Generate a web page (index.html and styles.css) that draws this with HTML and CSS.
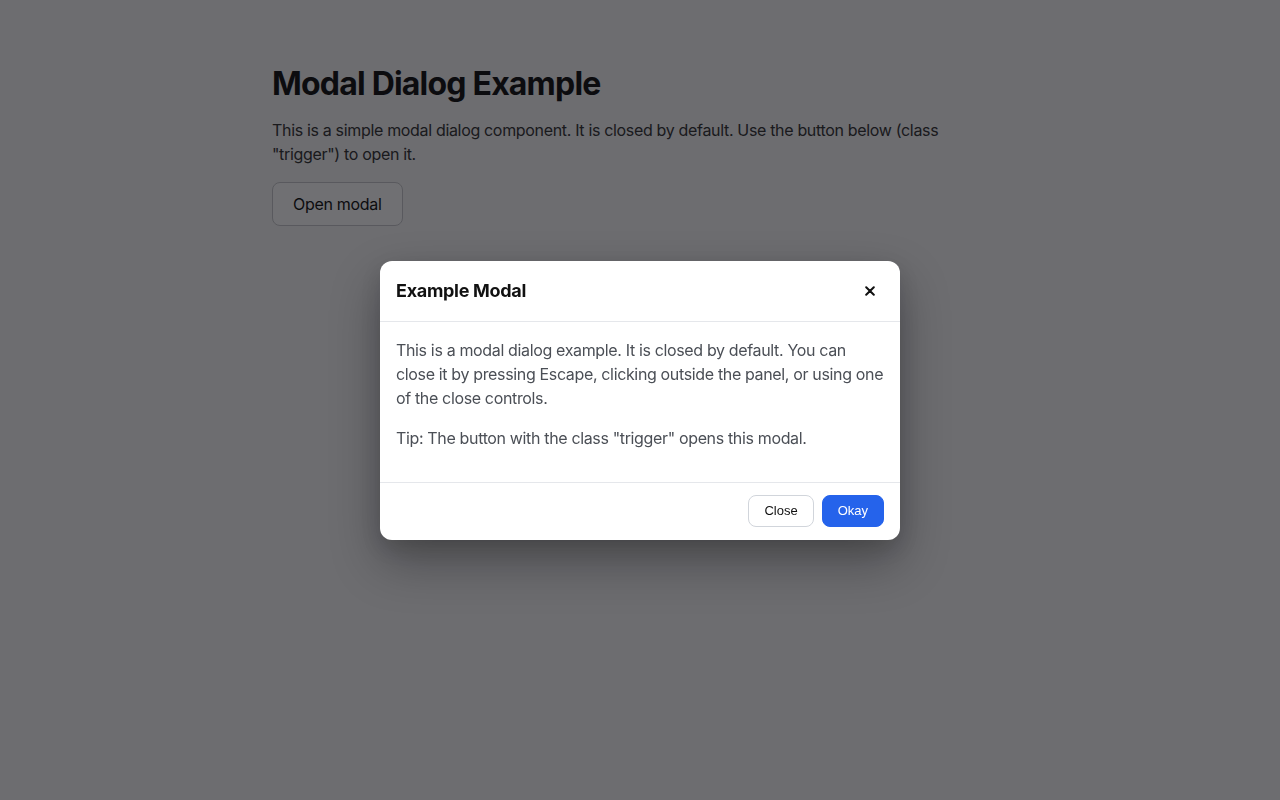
FILE: index.html
```html
<!DOCTYPE html>
<html lang="en">
<head>
<meta charset="utf-8">
<title>Modal Dialog Example</title>
<link rel="stylesheet" href="styles.css">
</head>
<body>
<main class="container">
  <h1 class="title">Modal Dialog Example</h1>
  <p class="lead">This is a simple modal dialog component. It is closed by default. Use the button below (class "trigger") to open it.</p>
  <button class="trigger" type="button">Open modal</button>
</main>

<div class="overlay">
  <div class="modal" role="dialog" aria-modal="true" aria-labelledby="modal-title">
    <header class="modal-header">
      <h2 class="modal-title" id="modal-title">Example Modal</h2>
      <button class="modal-x" type="button" aria-label="Close">
        <svg width="10" height="10" viewBox="0 0 10 10" aria-hidden="true"><path d="M1.2 1.2 L8.8 8.8 M8.8 1.2 L1.2 8.8" stroke="#111" stroke-width="2" stroke-linecap="round" fill="none"/></svg>
      </button>
    </header>
    <div class="modal-body">
      <p>This is a modal dialog example. It is closed by default. You can close it by pressing Escape, clicking outside the panel, or using one of the close controls.</p>
      <p>Tip: The button with the class "trigger" opens this modal.</p>
    </div>
    <footer class="modal-footer">
      <button class="btn btn-secondary" type="button">Close</button>
      <button class="btn btn-primary" type="button">Okay</button>
    </footer>
  </div>
</div>
</body>
</html>
```

FILE: styles.css
```css
* { box-sizing: border-box; }

html, body {
  margin: 0;
  padding: 0;
}

body {
  background: #f7f7f8;
  font-family: Inter, "Noto Sans", "Liberation Sans", sans-serif;
  color: #222;
}

.container {
  max-width: 768px;
  margin: 0 auto;
  padding: 64px 16px;
}

.title {
  margin: 0 0 14px;
  font-size: 32px;
  line-height: 40px;
  font-weight: 700;
  color: #111;
  letter-spacing: -0.8px;
}

.lead {
  margin: 0 0 16px;
  font-size: 16px;
  line-height: 24px;
  color: #333;
  letter-spacing: -0.33px;
}

.trigger {
  font-family: inherit;
  font-size: 16px;
  line-height: 20px;
  padding: 11px 20px;
  background: #ffffff;
  color: #111;
  border: 1px solid #c8c9cc;
  border-radius: 8px;
  letter-spacing: -0.3px;
}

.overlay {
  position: fixed;
  inset: 0;
  background: rgba(8, 9, 14, 0.58);
  display: flex;
  align-items: center;
  justify-content: center;
}

.modal {
  width: 520px;
  background: #fff;
  border-radius: 12px;
  box-shadow: 0 22px 50px rgba(0, 0, 0, 0.32), 0 8px 20px rgba(0, 0, 0, 0.12);
  overflow: hidden;
}

.modal-header {
  display: flex;
  align-items: center;
  justify-content: space-between;
  height: 61px;
  padding: 0 16px;
  border-bottom: 1px solid #e5e7eb;
}

.modal-title {
  margin: 0;
  font-size: 18px;
  line-height: 24px;
  font-weight: 700;
  color: #111;
  letter-spacing: -0.3px;
}

.modal-x {
  display: flex;
  align-items: center;
  justify-content: center;
  width: 28px;
  height: 28px;
  margin-right: 0;
  padding: 0;
  border: 0;
  background: transparent;
}

.modal-body {
  padding: 16px;
  border-bottom: 1px solid #e5e7eb;
}

.modal-body p {
  margin: 0 0 16px;
  font-size: 16px;
  line-height: 24px;
  color: #4b4f56;
  letter-spacing: -0.35px;
}

.modal-body p:last-child {
  margin-bottom: 0;
}

.modal-body {
  padding-bottom: 32px;
}

.modal-footer {
  display: flex;
  justify-content: flex-end;
  gap: 8px;
  padding: 12px 16px 13px;
}

.btn {
  font-family: "Liberation Sans", Arial, sans-serif;
  font-size: 13px;
  line-height: 18px;
  height: 32px;
  padding: 6px 15px;
  border-radius: 8px;
  border: 1px solid #d1d5db;
}

.btn-secondary {
  background: #fff;
  color: #111;
}

.btn-primary {
  background: #2563eb;
  border-color: #2563eb;
  color: #fff;
}
```
